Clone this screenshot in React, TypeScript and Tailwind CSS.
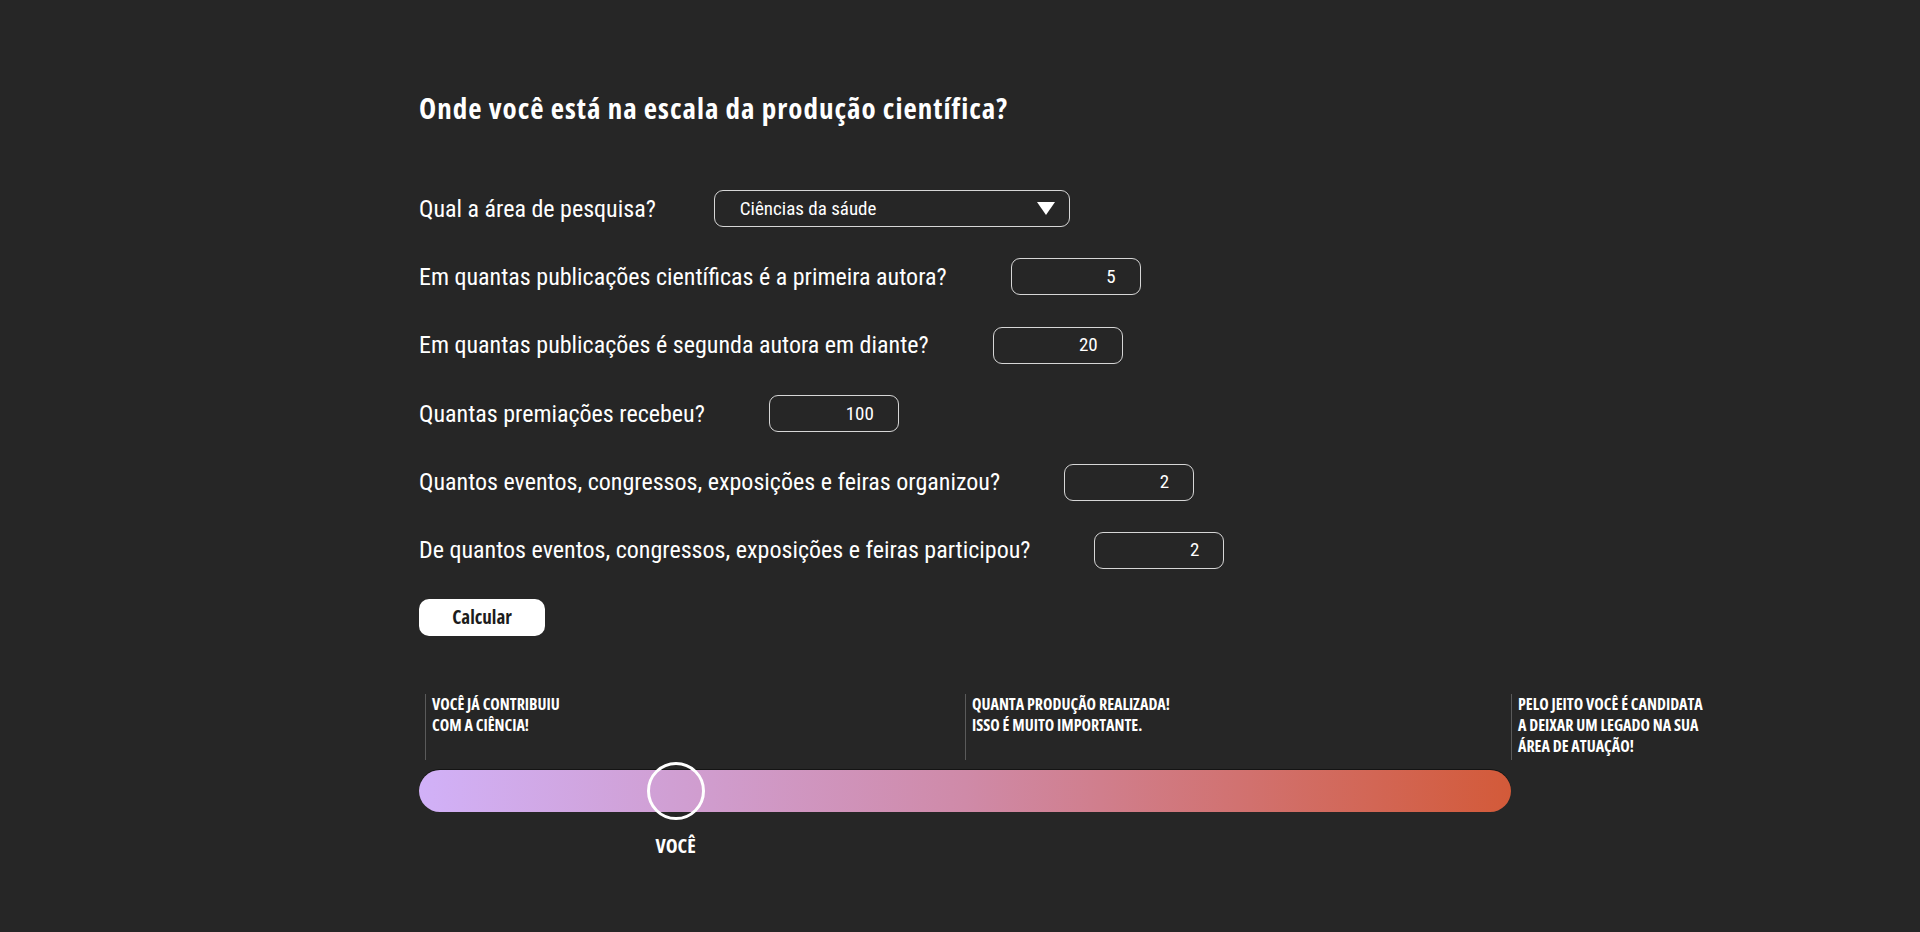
import React from "react";

const rows: { label: string; value: string }[] = [
  { label: "Em quantas publicações científicas é a primeira autora?", value: "5" },
  { label: "Em quantas publicações é segunda autora em diante?", value: "20" },
  { label: "Quantas premiações recebeu?", value: "100" },
  { label: "Quantos eventos, congressos, exposições e feiras organizou?", value: "2" },
  { label: "De quantos eventos, congressos, exposições e feiras participou?", value: "2" },
];

const bold = "font-['Open_Sans',sans-serif] font-stretch-condensed font-bold";

export default function App() {
  const pos = 23.5;
  return (
    <div className="min-h-screen w-full bg-[#262626] text-white font-['Roboto',sans-serif] font-stretch-condensed">
      <div className="pl-[419px] pt-[91px]">
        <h1 className={bold + " text-[29px] leading-[34px] tracking-[1px]"}>
          Onde você está na escala da produção científica?
        </h1>

        <div className="mt-[65px] flex flex-col gap-[31.4px]">
          <div className="flex items-center h-[37px]">
            <span className="text-[24px] leading-[30px]">Qual a área de pesquisa?</span>
            <div className="ml-[58px] flex h-[37px] w-[356px] items-center justify-between rounded-[9px] border border-[#d6d6d6] pl-[25px] pr-[13px]">
              <span className="text-[19px] leading-[24px]">Ciências da sáude</span>
              <svg width="20" height="15" viewBox="0 0 20 15">
                <path d="M1 1 L19 1 L10 14 Z" fill="#fff" />
              </svg>
            </div>
          </div>

          {rows.map((r) => (
            <div key={r.label} className="flex items-center h-[37px]">
              <span className="text-[24px] leading-[30px]">{r.label}</span>
              <div className="ml-[64px] flex h-[37px] w-[130px] items-center justify-end rounded-[9px] border border-[#d6d6d6] pr-[24px]">
                <span className="text-[19px] leading-[24px]">{r.value}</span>
              </div>
            </div>
          ))}
        </div>

        <button className={bold + " mt-[30px] flex h-[37px] w-[126px] items-center justify-center rounded-[10px] bg-white text-[19px] text-[#1c1c1c]"}>
          Calcular
        </button>

        <div className={bold + " mt-[58px] flex text-[16px] leading-[21px] uppercase"}>
          <div className="ml-[6px] h-[66px] w-[540px] border-l border-[#5a5a5a] pl-[6px]">
            <div>Você já contribuiu</div>
            <div>com a ciência!</div>
          </div>
          <div className="h-[66px] w-[546px] border-l border-[#5a5a5a] pl-[6px]">
            <div>Quanta produção realizada!</div>
            <div>Isso é muito importante.</div>
          </div>
          <div className="h-[66px] border-l border-[#5a5a5a] pl-[6px]">
            <div>Pelo jeito você é candidata</div>
            <div>a deixar um legado na sua</div>
            <div>área de atuação!</div>
          </div>
        </div>

        <div className="relative mt-[10px] h-[42px] w-[1092px] rounded-full bg-[linear-gradient(to_right,#d1b1f8,#cf8aa8_50%,#d35a39)] shadow-[0_-1px_0_#141414]">
          <div
            className="absolute top-[-8px] h-[58px] w-[58px] -translate-x-1/2 rounded-full border-[3px] border-white"
            style={{ left: `${pos}%` }}
          />
          <div
            className={bold + " absolute top-[64px] -translate-x-1/2 text-[20px] leading-[24px]"}
            style={{ left: `${pos}%` }}
          >
            VOCÊ
          </div>
        </div>
      </div>
    </div>
  );
}
